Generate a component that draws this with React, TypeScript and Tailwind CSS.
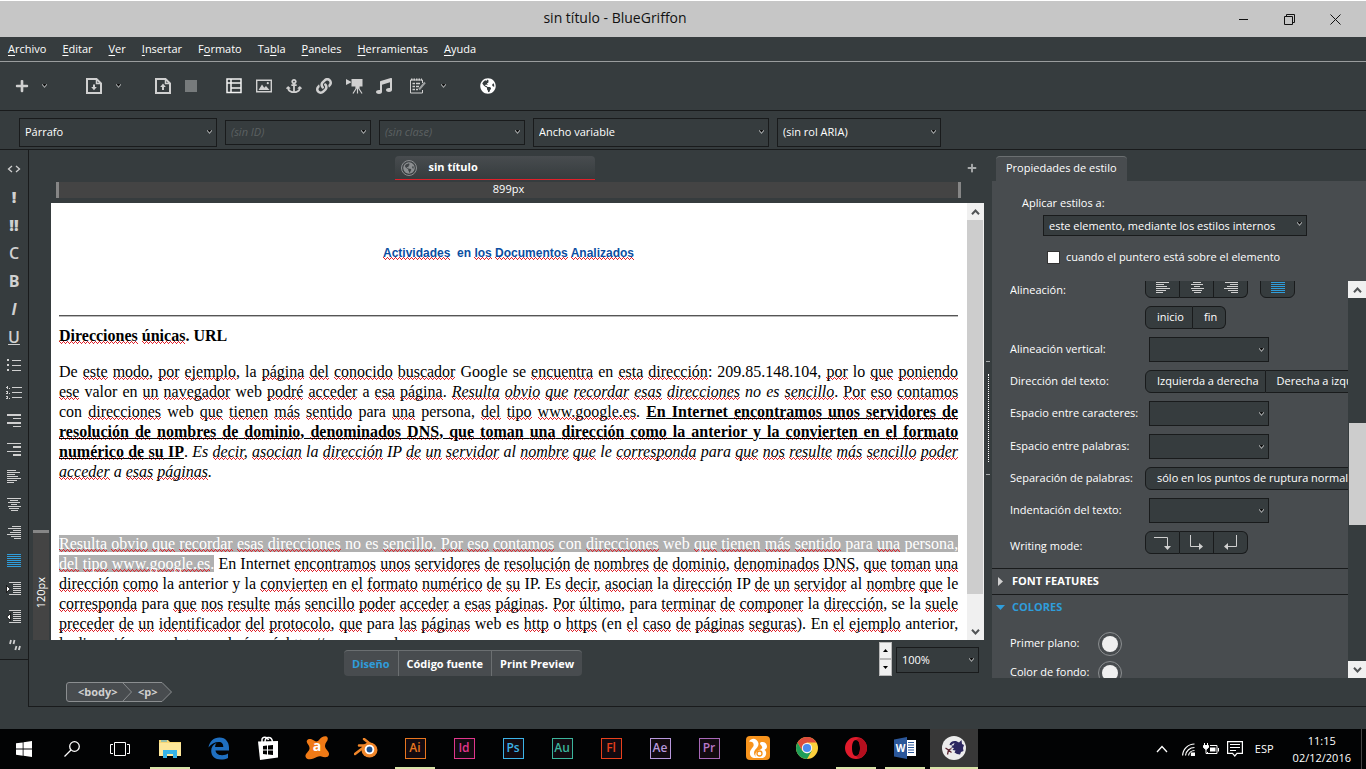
import type { ReactNode } from 'react';
import { FaAnchor, FaGlobeAmericas, FaLink, FaMusic, FaPlus } from 'react-icons/fa';

const MENUS = [
  ['', 'A', 'rchivo'],
  ['', 'E', 'ditar'],
  ['', 'V', 'er'],
  ['', 'I', 'nsertar'],
  ['F', 'o', 'rmato'],
  ['Ta', 'b', 'la'],
  ['', 'P', 'aneles'],
  ['', 'H', 'erramientas'],
  ['', 'A', 'yuda'],
];

// words the (English) spell checker accepts; everything else gets a squiggle
const KNOWN_WORDS = new Set(
  'De la Google se en lo valor web a no es con para persona anterior y al le IP Es En Internet o URL as'.split(' '),
);

function Proof({ children }: { children: string }) {
  const parts = children.split(/([\p{L}]+(?:\.[\p{L}]+)*)/u);
  return (
    <>
      {parts.map((part, i) =>
        i % 2 === 1 && !KNOWN_WORDS.has(part) ? (
          <span
            key={i}
            className="bg-[linear-gradient(90deg,#e0202a_1px,transparent_1px),linear-gradient(90deg,#e0202a_1px,transparent_1px),linear-gradient(90deg,#e0202a_1px,transparent_1px)] bg-[length:4px_1px,2px_1px,4px_1px] bg-[position:0_calc(100%-2px),1px_calc(100%-1px),2px_100%] bg-repeat-x"
          >
            {part}
          </span>
        ) : (
          part
        ),
      )}
    </>
  );
}

function Caret({ className = '' }: { className?: string }) {
  return (
    <svg viewBox="0 0 5 4" className={`h-1 w-[5px] ${className}`} aria-hidden>
      <path d="M0 0h5v1L2.500 4 0 1z" fill="#a9acad" />
      <path d="M.5 0h4L2.500 2.500z" fill="#0c0c0c" />
    </svg>
  );
}

interface DropDownProps {
  label: string;
  value?: string;
  className: string;
  muted?: boolean;
}

function DropDown({ label, value = '', className, muted }: DropDownProps) {
  return (
    <div className={`relative ${className}`}>
      <select
        aria-label={label}
        className={`h-full w-full appearance-none border border-[#191b1c] bg-[#363c3e] pl-[5px] pr-4 pt-px outline-none ${muted ? 'italic text-[#5c6162]' : 'text-white'}`}
      >
        <option>{value}</option>
      </select>
      <Caret className="pointer-events-none absolute right-[5px] top-1/2 -mt-0.5" />
    </div>
  );
}

function Lines({ rows, className = 'text-[#d0d0d0]' }: { rows: number[][]; className?: string }) {
  return (
    <svg viewBox="0 0 16 14" className={`h-3.5 w-4 ${className}`} fill="currentColor" shapeRendering="crispEdges" aria-hidden>
      {rows.map(([x, y, w, h = 1], i) => (
        <rect key={i} x={x} y={y} width={w} height={h} />
      ))}
    </svg>
  );
}

const LEFT = [[1, 0, 9], [1, 2, 13], [1, 4, 8], [1, 6, 11], [1, 8, 14], [1, 10, 10], [1, 12, 7]];
const CENTER = [[1, 0, 14], [4, 2, 8], [2, 4, 12], [5, 6, 6], [2, 8, 13], [3, 10, 10], [5, 12, 7]];
const RIGHT = [[6, 0, 9], [2, 2, 13], [7, 4, 8], [4, 6, 11], [1, 8, 14], [5, 10, 10], [8, 12, 7]];
const FULL = [[1, 0, 14], [1, 2, 14], [1, 4, 14], [1, 6, 14], [1, 8, 14], [1, 10, 14], [1, 12, 14]];
const TEXT = [[3, 0, 12], [7, 2, 8], [7, 4, 8], [7, 6, 8], [7, 8, 8], [7, 10, 8], [3, 12, 12]];

function Indent({ flip }: { flip?: boolean }) {
  return (
    <span className="relative">
      <Lines rows={TEXT} />
      <svg viewBox="0 0 5 8" className="absolute left-0 top-[3px] h-2 w-[5px]" aria-hidden>
        <path d={flip ? 'M4.500.5v7L.8 4z' : 'M.5.5v7L4.200 4z'} fill="#fff" stroke="#000" strokeWidth=".8" />
      </svg>
    </span>
  );
}

const SIDE_TOOLS: [string, ReactNode][] = [
  [
    'Etiqueta',
    <svg viewBox="0 0 14 8" className="h-2 w-3.5" fill="none" stroke="#d0d0d0" strokeWidth="1.300" aria-hidden>
      <path d="M5 1 1.500 4 5 7M9 1l3.500 3L9 7" />
    </svg>,
  ],
  ['Énfasis', <span className="text-base font-extrabold">!</span>],
  ['Énfasis fuerte', <span className="text-base font-extrabold">!!</span>],
  ['Código', <span className="text-base font-semibold">C</span>],
  ['Negrita', <span className="text-base font-bold">B</span>],
  ['Cursiva', <span className="text-base font-bold italic">I</span>],
  ['Subrayado', <span className="text-base font-semibold underline">U</span>],
  [
    'Lista',
    <Lines rows={[[1, 1, 2, 2], [6, 2, 9], [1, 6, 2, 2], [6, 7, 9], [1, 11, 2, 2], [6, 12, 9]]} />,
  ],
  [
    'Lista numerada',
    <Lines
      rows={[[1, 0, 1, 3], [0, 1, 1], [3, 2, 1], [6, 1, 10], [0, 5, 2], [1, 6, 1], [0, 7, 2], [3, 7, 1], [6, 6, 10], [0, 10, 2], [1, 11, 1], [0, 12, 2], [3, 12, 1], [6, 11, 10]]}
    />,
  ],
  ['Término', <Lines rows={[[1, 0, 14, 2], [7, 4, 8], [1, 8, 14, 2], [7, 12, 8]]} />],
  ['Definición', <Lines rows={[[1, 1, 14], [7, 4, 8, 2], [1, 9, 14], [7, 12, 8, 2]]} />],
  ['Izquierda', <Lines rows={LEFT} />],
  ['Centro', <Lines rows={CENTER} />],
  ['Derecha', <Lines rows={RIGHT} />],
  ['Justificar', <Lines rows={FULL} className="text-[#2f9ddb]" />],
  ['Aumentar sangría', <Indent />],
  ['Reducir sangría', <Indent flip />],
  [
    'Cita',
    <svg viewBox="0 0 14 14" className="size-3.5" fill="none" stroke="#d0d0d0" strokeWidth="1.800" aria-hidden>
      <path d="M4 2 3 6M7.500 2l-1 4M9.500 8l-1.200 4M13 8l-1.200 4" />
    </svg>,
  ],
];

function ToolButton({ label, className, children }: { label: string; className: string; children: ReactNode }) {
  return (
    <button type="button" aria-label={label} className={`flex h-6 shrink-0 items-center justify-center text-[#d0d0d0] ${className}`}>
      {children}
    </button>
  );
}

function PageIcon({ up }: { up?: boolean }) {
  return (
    <svg viewBox="0 0 16 16" className="size-4" fill="none" stroke="#d0d0d0" strokeWidth="2" aria-hidden>
      <path d="M1 1h9.500L15 5.500V15H1z" />
      <path d="M10.500 1v4.500H15" strokeWidth="1.500" />
      <path d={up ? 'M8 12V8' : 'M8 6.500v3'} />
      <path d={up ? 'M5.200 9 8 5.500 10.800 9z' : 'M5.200 9 8 12.200 10.800 9z'} fill="#d0d0d0" stroke="none" />
    </svg>
  );
}

function Toolbar() {
  return (
    <div className="flex h-[49px] items-center border-b border-[#191b1c] pl-2.5">
      <ToolButton label="Nuevo" className="w-6"><FaPlus className="size-3.5" /></ToolButton>
      <ToolButton label="Opciones de nuevo" className="w-5"><Caret /></ToolButton>
      <ToolButton label="Abrir" className="ml-7 w-6"><PageIcon /></ToolButton>
      <ToolButton label="Opciones de abrir" className="w-6"><Caret /></ToolButton>
      <ToolButton label="Guardar" className="ml-5 w-[26px]"><PageIcon up /></ToolButton>
      <ToolButton label="Detener" className="w-[30px]"><span className="size-3 bg-[#777b7c]" /></ToolButton>
      <div className="ml-[13px] flex">
        <ToolButton label="Tabla" className="w-[30px]">
          <svg viewBox="0 0 16 16" className="size-4" fill="none" stroke="#f2f2f2" strokeWidth="1.500" aria-hidden>
            <path d="M1 1h14v13.500H1zM1 5h14M5 1v13.500M5 10h10" />
          </svg>
        </ToolButton>
        <ToolButton label="Imagen" className="w-[30px]">
          <svg viewBox="0 0 16 14" className="h-3.5 w-4" aria-hidden>
            <path d="M.7 1.200h14.600v11.600H.7z" fill="none" stroke="#d0d0d0" strokeWidth="1.400" />
            <path d="M2.500 11 6 5.500l2.200 3.200 1.800-1.700L13.500 11z" fill="#d0d0d0" />
            <circle cx="11.800" cy="4.200" r="1.100" fill="#d0d0d0" />
          </svg>
        </ToolButton>
        <ToolButton label="Ancla" className="w-[30px]"><FaAnchor className="size-4" /></ToolButton>
        <ToolButton label="Enlace" className="w-[30px]"><FaLink className="size-4" /></ToolButton>
        <ToolButton label="Vídeo" className="w-[30px]">
          <svg viewBox="0 0 17 16" className="h-4 w-[17px]" fill="#d0d0d0" aria-hidden>
            <path d="M5.500 1h11v7.500h-11zM0 1l5 2.700v.8L0 7z" />
            <path d="M10 8h3v2h-3zM10.500 10l-3.500 5.500M12.500 10l3.500 5.500M11.500 10v5.500" stroke="#d0d0d0" strokeWidth="1.200" />
          </svg>
        </ToolButton>
        <ToolButton label="Audio" className="w-[30px]"><FaMusic className="size-4" /></ToolButton>
      </div>
      <ToolButton label="Formulario" className="ml-1 w-[30px]">
        <svg viewBox="0 0 16 16" className="size-4" fill="none" stroke="#d0d0d0" aria-hidden>
          <path d="M12.500 5V2h-12v13h12v-3" />
          <path d="M1 1.500h11" strokeWidth="2" strokeDasharray="1.500 1" />
          <path d="M2.500 5.500H5M6 5.500h4M2.500 8.500H5M6 8.500h3M2.500 11.500H5M6 11.500h2" strokeWidth="1.500" />
          <path d="m9 11.500 6-7" strokeWidth="2" stroke="#9ea1a2" />
        </svg>
      </ToolButton>
      <ToolButton label="Opciones de formulario" className="w-5"><Caret /></ToolButton>
      <ToolButton label="Navegador" className="ml-[23px] w-6"><FaGlobeAmericas className="size-4 text-white" /></ToolButton>
    </div>
  );
}

function ScrollArrow({ label, down }: { label: string; down?: boolean }) {
  return (
    <button type="button" aria-label={label} className="flex h-[17px] shrink-0 items-center justify-center bg-[#f0f0f0]">
      <svg viewBox="0 0 9 6" className="h-1.5 w-[9px]" fill="none" stroke="#505355" strokeWidth="2" aria-hidden>
        <path d={down ? 'M1 .8 4.500 4.500 8 .8' : 'M1 5.200 4.500 1.500 8 5.200'} />
      </svg>
    </button>
  );
}

function Editor() {
  return (
    <div className="flex min-h-0 flex-1 pl-1">
      <div className="mr-0.5 flex w-4 flex-col justify-end">
        <div className="flex h-[110px] items-center justify-center border-t-[3px] border-[#868686] bg-[#444] pt-3 text-[11px] text-white">
          <span className="rotate-180 [writing-mode:vertical-rl]">120px</span>
        </div>
      </div>
      <article className="min-w-0 flex-1 overflow-hidden bg-white pl-2 pr-[9px] pt-10 font-['Liberation_Serif',serif] text-base leading-5 text-black">
        <h1 className="whitespace-pre text-center font-['Liberation_Sans_Narrow','Liberation_Sans',sans-serif] text-xs leading-5 font-bold text-[#0b4ea2]">
          <Proof>{'Actividades  en los Documentos Analizados'}</Proof>
        </h1>
        <hr className="mt-[52px] h-0.5 border-t border-b border-t-[#555] border-b-[#bbb]" />
        <h2 className="mt-[9px] font-bold"><Proof>Direcciones únicas. URL</Proof></h2>
        <p className="mt-4 text-justify">
          <Proof>De este modo, por ejemplo, la página del conocido buscador Google se encuentra en esta dirección: 209.85.148.104, por lo que poniendo ese valor en un navegador web podré acceder a esa página. </Proof>
          <i><Proof>Resulta obvio que recordar esas direcciones no es sencillo</Proof></i>
          <Proof>. Por eso contamos con direcciones web que tienen más sentido para una persona, del tipo www.google.es. </Proof>
          <b className="underline">
            <Proof>En Internet encontramos unos servidores de resolución de nombres de dominio, denominados DNS, que toman una dirección como la anterior y la convierten en el formato numérico de su IP</Proof>
          </b>
          .{' '}
          <i><Proof>Es decir, asocian la dirección IP de un servidor al nombre que le corresponda para que nos resulte más sencillo poder acceder a esas páginas.</Proof></i>
        </p>
        <p className="mt-[52px] text-justify">
          <span className="bg-[#b0b0b0] text-white">
            <Proof>Resulta obvio que recordar esas direcciones no es sencillo. Por eso contamos con direcciones web que tienen más sentido para una persona, del tipo www.google.es.</Proof>
          </span>{' '}
          <Proof>En Internet encontramos unos servidores de resolución de nombres de dominio, denominados DNS, que toman una dirección como la anterior y la convierten en el formato numérico de su IP. Es decir, asocian la dirección IP de un servidor al nombre que le corresponda para que nos resulte más sencillo poder acceder a esas páginas. Por último, para terminar de componer la dirección, se la suele preceder de un identificador del protocolo, que para las páginas web es http o https (en el caso de páginas seguras). En el ejemplo anterior, la dirección completa quedaría así: http://www.google.es</Proof>
        </p>
      </article>
      <div className="flex w-[17px] flex-col bg-[#f0f0f0]">
        <ScrollArrow label="Subir" />
        <div className="mr-px flex-[374] bg-[#cdcdcd]" />
        <div className="flex-[29]" />
        <ScrollArrow label="Bajar" down />
      </div>
    </div>
  );
}

function ViewBar() {
  const tab = 'border-t border-[#6b6f71] bg-[#484c4f] px-2 py-1 font-bold';
  return (
    <div className="flex h-[39px] shrink-0 items-start">
      <div className="ml-[315px] mt-2.5 flex text-[11px] leading-[17px] text-white">
        <button type="button" className={`${tab} rounded-l text-[#2f9ddb]`}>Diseño</button>
        <button type="button" className={`${tab} border-l`}>Código fuente</button>
        <button type="button" className={`${tab} rounded-r border-l`}>Print Preview</button>
      </div>
      <div className="ml-auto mr-1 mt-0.5 flex h-[34px] w-[13px] flex-col gap-0.5 bg-[#b8b8b8] p-px">
        {['M0 3h5L2.500 0z', 'M0 0h5L2.500 3z'].map((d, i) => (
          <button key={d} type="button" aria-label={i ? 'Reducir zoom' : 'Aumentar zoom'} className="flex flex-1 items-center justify-center bg-[#f0f0f0]">
            <svg viewBox="0 0 5 3" className="h-[3px] w-[5px]" aria-hidden><path d={d} /></svg>
          </button>
        ))}
      </div>
      <DropDown label="Zoom" value="100%" className="mr-[5px] mt-[7px] h-[26px] w-[83px]" />
    </div>
  );
}

function Breadcrumb() {
  return (
    <nav className="flex h-[27px] shrink-0 pl-[37px] pt-[3px]">
      <div className="relative flex h-5 w-[106px] items-center text-[11px] font-bold text-[#d0d0d0]">
        <svg viewBox="0 0 106 20" className="absolute inset-0" fill="#484c4f" stroke="#8b8e90" aria-hidden>
          <path d="M3 .5h93l9.500 9.500-9.500 9.500H3A2.500 2.500 0 0 1 .5 17V3A2.500 2.500 0 0 1 3 .5z" />
          <path d="m56.500.5 9 9.500-9 9.500" fill="none" />
        </svg>
        <button type="button" className="relative w-[60px] pl-3 text-left">&lt;body&gt;</button>
        <button type="button" className="relative w-10 pl-3 text-left">&lt;p&gt;</button>
      </div>
    </nav>
  );
}

const segment = 'flex h-[23px] shrink-0 items-center justify-center border border-[#191b1c] bg-[#363c3e]';

function WritingArrow({ d, head }: { d: string; head: string }) {
  return (
    <svg viewBox="0 0 18 16" className="h-4 w-[18px]" aria-hidden>
      <path d={d} fill="none" stroke="#d0d0d0" />
      <path d={head} fill="#d0d0d0" />
    </svg>
  );
}

function PropertyRow({ label, align = 'items-center', children }: { label: string; align?: string; children: ReactNode }) {
  return (
    <div className={`flex ${align}`}>
      <span className="w-[135px] shrink-0">{label}</span>
      {children}
    </div>
  );
}

function StylePanel() {
  const field = 'ml-1 h-[25px] w-[120px]';
  return (
    <aside className="flex w-[374px] shrink-0 flex-col pb-7 text-white">
      <div className="flex h-[31px] items-end pl-1">
        <button type="button" className="h-[25px] rounded-t border-t border-[#6b6f71] bg-[#484c4f] px-2.5 pb-0.5">Propiedades de estilo</button>
      </div>
      <div className="flex min-h-0 flex-1 flex-col bg-[#484c4f]">
        <div className="h-[100px] shrink-0 pl-[30px] pt-3.5">
          <label htmlFor="apply-to" className="block leading-4">Aplicar estilos a:</label>
          <div className="relative ml-[21px] mt-1 h-[21px] w-[264px]">
            <select id="apply-to" className="h-full w-full appearance-none border border-[#191b1c] bg-[#363c3e] pl-[5px] pt-px">
              <option>este elemento, mediante los estilos internos</option>
            </select>
            <Caret className="pointer-events-none absolute right-[5px] top-[7px]" />
          </div>
          <label className="ml-[25px] mt-3 flex items-center leading-[18px]">
            <input type="checkbox" className="mr-1.5 size-[13px] appearance-none border border-[#333] bg-white" />
            cuando el puntero está sobre el elemento
          </label>
        </div>
        <div className="flex min-h-0 flex-1">
          <div className="min-w-0 flex-1 overflow-hidden">
            <div className="flex flex-col gap-2 whitespace-nowrap pb-3.5 pl-[18px]">
              <div className="flex h-[17px] items-end overflow-hidden">
                <span className="w-[135px] leading-4">Alineación:</span>
                <button type="button" aria-label="Alinear a la izquierda" className={`${segment} w-[35px] rounded-l-md`}><Lines rows={LEFT} /></button>
                <button type="button" aria-label="Centrar" className={`${segment} w-[34px] border-l-0`}><Lines rows={CENTER} /></button>
                <button type="button" aria-label="Alinear a la derecha" className={`${segment} w-[34px] rounded-r-md border-l-0`}><Lines rows={RIGHT} /></button>
                <button type="button" aria-label="Justificar texto" className={`${segment} ml-3 w-[35px] rounded-md`}><Lines rows={FULL} className="text-[#2f9ddb]" /></button>
              </div>
              <PropertyRow label="">
                <button type="button" className={`${segment} rounded-l-md pl-[11px] pr-2`}>inicio</button>
                <button type="button" className={`${segment} rounded-r-md border-l-0 pl-[11px] pr-2`}>fin</button>
              </PropertyRow>
              <PropertyRow label="Alineación vertical:"><DropDown label="Alineación vertical" className={field} /></PropertyRow>
              <PropertyRow label="Dirección del texto:">
                <button type="button" className={`${segment} rounded-l-md pl-[11px] pr-1.5`}>Izquierda a derecha</button>
                <button type="button" className={`${segment} rounded-r-md border-l-0 pl-[11px] pr-1.5`}>Derecha a izquierda</button>
              </PropertyRow>
              <PropertyRow label="Espacio entre caracteres:"><DropDown label="Espacio entre caracteres" className={field} /></PropertyRow>
              <PropertyRow label="Espacio entre palabras:"><DropDown label="Espacio entre palabras" className={field} /></PropertyRow>
              <PropertyRow label="Separación de palabras:">
                <button type="button" className={`${segment} rounded-md pl-[11px] pr-1.5`}>sólo en los puntos de ruptura normales</button>
              </PropertyRow>
              <PropertyRow label="Indentación del texto:"><DropDown label="Indentación del texto" className={field} /></PropertyRow>
              <PropertyRow label="Writing mode:" align="items-end">
                <button type="button" aria-label="Horizontal" className={`${segment} w-[35px] rounded-l-md`}>
                  <WritingArrow d="M0 2.500h13.500V12" head="M10 11h7l-3.500 4z" />
                </button>
                <button type="button" aria-label="Vertical hacia la derecha" className={`${segment} w-[34px] border-l-0`}>
                  <WritingArrow d="M2.500 0v11.500H12" head="M11 8v7l4-3.500z" />
                </button>
                <button type="button" aria-label="Vertical hacia la izquierda" className={`${segment} w-[34px] rounded-r-md border-l-0`}>
                  <WritingArrow d="M14.500 0v11.500H5" head="M6 8v7l-4-3.500z" />
                </button>
              </PropertyRow>
            </div>
            <button type="button" className="flex h-[26px] w-full items-center border-t border-[#191b1c] pl-1.5 text-[11px] font-bold">
              <svg viewBox="0 0 5 9" className="mr-[9px] h-[9px] w-[5px]" aria-hidden><path d="M0 0v9l5-4.500z" fill="#d0d0d0" /></svg>
              FONT FEATURES
            </button>
            <button type="button" className="flex h-[26px] w-full items-center border-t border-[#191b1c] pl-1 text-[11px] font-bold text-[#2f9ddb]">
              <svg viewBox="0 0 9 5" className="mr-[7px] h-[5px] w-[9px]" aria-hidden><path d="M0 0h9L4.500 5z" fill="currentColor" /></svg>
              COLORES
            </button>
            <div className="pl-[18px] pt-[9px]">
              {['Primer plano:', 'Color de fondo:'].map((label) => (
                <div key={label} className="flex h-[29px] items-center">
                  <span className="w-[88px]">{label}</span>
                  <button type="button" aria-label={label} className="flex size-6 items-center justify-center rounded-full border border-[#8b8e90]">
                    <span className="size-4 rounded-full bg-[#f0f0f0]" />
                  </button>
                </div>
              ))}
            </div>
          </div>
          <div className="flex w-[18px] flex-col bg-[#363c3e]">
            <ScrollArrow label="Subir panel" />
            <div className="flex-[125]" />
            <div className="ml-px flex-[102] bg-[#cdcdcd]" />
            <div className="flex-[136]" />
            <ScrollArrow label="Bajar panel" down />
          </div>
        </div>
      </div>
    </aside>
  );
}

function Adobe({ text, className }: { text: string; className: string }) {
  return (
    <span className={`flex size-[21px] items-center justify-center border bg-[#120a10] text-xs font-semibold ${className}`}>
      {text}
    </span>
  );
}

const APPS: { name: string; icon: ReactNode; open?: boolean; active?: boolean }[] = [
  {
    name: 'Explorador de archivos',
    open: true,
    icon: (
      <svg viewBox="0 0 22 19" className="h-[19px] w-[22px]" aria-hidden>
        <path d="M0 1h9l2 2h11v14H0z" fill="#f8d775" />
        <path d="M0 4h22v13H0z" fill="#fde79a" />
        <path d="M2 1.500h6v1H2z" fill="#3cabdf" />
        <path d="M4 19v-8h14v8h-4v-4H8v4z" fill="#35b3e6" />
      </svg>
    ),
  },
  {
    name: 'Edge',
    icon: (
      <svg viewBox="0 0 22 23" className="h-[23px] w-[22px]" aria-hidden>
        <path
          d="M.5 10.500C1.500 4.500 5.500.5 11.500.5c6.500 0 9.500 5 9.500 10v3H7.500c.3 3 3 4.700 6.500 4.700 2.500 0 4.500-.7 6-1.600V21c-2 1-4.500 1.500-7 1.500-6 0-9.800-3.500-9.800-8.500 0-4 2-6.500 5.300-8-1 1.200-1.300 2.500-1.400 4h8.200c0-3-1.300-5-4.500-5-4 0-8 2-10.300 5.500z"
          fill="#1f6fc0"
        />
      </svg>
    ),
  },
  {
    name: 'Tienda',
    icon: (
      <svg viewBox="0 0 22 24" className="h-6 w-[22px]" aria-hidden>
        <path d="M5 6V3.500C5 .5 10 .5 11.500 4M8 6c0-6 7-6 7.500 0" fill="none" stroke="#fff" strokeWidth="1.500" />
        <path d="m1 5.500 20-.5v16.500L3 24z" fill="#fff" />
        <path d="m6 10 4-.4v3.900H6zM11 9.500l5-.5v4.500h-5zM6 14.500h4v4l-4-.4zM11 14.500h5V19l-5-.5z" fill="#000" />
      </svg>
    ),
  },
  {
    name: 'Avast',
    icon: (
      <span className="relative flex">
        <svg viewBox="0 0 24 24" className="size-6" aria-hidden>
          <path d="M14 4c2-3 7-5 8.500-2.500C24 4.500 20 6.500 20 10s4.500 5 4 8.500-5 3-7.500 2-5 .5-8 2S1 23.500.5 20.500 4 16 4.500 12.500.5 7 2 4.500 7 3 9 4.500 13 5.500 14 4z" fill="#f07a16" />
        </svg>
        <span className="absolute inset-0 text-center text-sm leading-5 font-bold text-white">a</span>
      </span>
    ),
  },
  {
    name: 'Blender',
    icon: (
      <svg viewBox="0 0 24 20" className="h-5 w-6" aria-hidden>
        <path d="M1 16 12 7.500H5M10 1l10 8" fill="none" stroke="#f0862a" strokeWidth="2.500" strokeLinecap="round" />
        <ellipse cx="15.500" cy="12" rx="8" ry="7.500" fill="#f0862a" />
        <circle cx="15.500" cy="11.500" r="4.800" fill="#fff" />
        <circle cx="15.500" cy="11.500" r="2.900" fill="#1b4f8f" />
      </svg>
    ),
  },
  { name: 'Illustrator', open: true, icon: <Adobe text="Ai" className="border-[#e8761f] text-[#e8761f]" /> },
  { name: 'InDesign', icon: <Adobe text="Id" className="border-[#e0368c] text-[#e0368c]" /> },
  { name: 'Photoshop', icon: <Adobe text="Ps" className="border-[#3cb4e8] text-[#3cb4e8]" /> },
  { name: 'Audition', icon: <Adobe text="Au" className="border-[#3bb49c] text-[#3bb49c]" /> },
  { name: 'Flash', icon: <Adobe text="Fl" className="border-[#e8401c] text-[#e8401c]" /> },
  { name: 'After Effects', icon: <Adobe text="Ae" className="border-[#b898dc] text-[#b898dc]" /> },
  { name: 'Premiere', icon: <Adobe text="Pr" className="border-[#a868b8] text-[#b878c8]" /> },
  {
    name: 'UC Browser',
    icon: (
      <svg viewBox="0 0 24 24" className="size-6" aria-hidden>
        <rect width="24" height="24" rx="4" fill="#f8941d" />
        <path d="M3 5.500C5 2.500 8 2 10.500 4s2.500 5 1 7-3.500 3.500-3.500 6 2 4.500 4.500 5H8c-3-.5-4.500-3-4-6s3.500-4.500 3.700-7C7.800 6.500 6 5.500 3 5.500z" fill="#fff" />
        <path d="M16.500 6c2.500 0 4.500 2 4.500 4.500 0 2-1.500 2.500-2.500 3.500 1.500 1 2 2.500 1.500 4.500S18 22 16 22h-4c-2.500 0-3.500-3-2-5.500s5-2.500 6-4.500-2-3-2-4.500 1.200-1.500 2.500-1.500z" fill="#fff" />
        <circle cx="13.500" cy="17.500" r="2.500" fill="none" stroke="#f8941d" strokeWidth="1.300" />
      </svg>
    ),
  },
  {
    name: 'Chrome',
    icon: (
      <svg viewBox="0 0 22 22" className="size-[22px]" aria-hidden>
        <circle cx="11" cy="11" r="11" fill="#fcd03c" />
        <path d="M1.500 5.500A11 11 0 0 1 20.500 5.500H11L6.200 13.800z" fill="#dd4b3c" />
        <path d="M1.500 5.500A11 11 0 0 0 11 22l4.800-8.300L11 16.500 6.200 13.800z" fill="#1f9e58" />
        <circle cx="11" cy="11" r="5.200" fill="#f4f4f4" />
        <circle cx="11" cy="11" r="4.100" fill="#4a8af0" />
      </svg>
    ),
  },
  {
    name: 'Opera',
    open: true,
    icon: (
      <svg viewBox="0 0 22 22" className="size-[22px]" aria-hidden>
        <path d="M11 0a11 11 0 1 0 0 22 11 11 0 0 0 0-22zm0 3c2.600 0 4 3.500 4 8s-1.400 8-4 8-4-3.500-4-8 1.400-8 4-8z" fill="#e01b2c" fillRule="evenodd" />
        <path d="M17 1.800A11 11 0 0 1 17 20.200c-2 1-4.500 1-6-1.200 2.600 0 4-3.500 4-8s-1.400-8-4-8c1.500-2 4-2.200 6-1.200z" fill="#b40f1e" />
      </svg>
    ),
  },
  {
    name: 'Word',
    open: true,
    icon: (
      <span className="relative flex">
        <svg viewBox="0 0 22 22" className="size-[22px]" aria-hidden>
          <path d="M12 3h10v16H12z" fill="#fff" />
          <path d="M14 5.500h6M14 8h6M14 10.500h6M14 13h6M14 15.500h6" stroke="#2b579a" />
          <path d="m0 2.500 13-2.500v22L0 19.500z" fill="#2b579a" />
        </svg>
        <span className="absolute left-0 top-0 w-[13px] text-center text-[10px] leading-[22px] font-bold text-white">W</span>
      </span>
    ),
  },
  {
    name: 'BlueGriffon',
    open: true,
    active: true,
    icon: (
      <svg viewBox="0 0 24 24" className="size-6" aria-hidden>
        <circle cx="12" cy="12" r="12" fill="#ececec" />
        <path d="M7.500 9C8 5.500 11 4.500 14 5l3 1.500L19.500 4l.5 4 2 1-1 3 .5 3-2.500 1-1 2.500-3-.5-2.500-1.500 1-2-3-.5 1.500-2-3-.5 2-2z" fill="#2c2760" />
        <path d="m3.500 12 3 2 3-1.500M6.500 14l-1 4.500M6.500 14l3 2.500" fill="none" stroke="#5a2430" strokeWidth="1.300" />
        <path d="M9.500 8.500 12.500 7l-1 2.500z" fill="#ececec" />
      </svg>
    ),
  },
];

function Taskbar() {
  const system = 'flex w-12 items-center justify-center';
  return (
    <footer className="flex h-10 shrink-0 bg-[#020304] text-xs text-white">
      <button type="button" aria-label="Inicio" className={system}>
        <svg viewBox="0 0 16 16" className="size-4" fill="#fff" aria-hidden>
          <path d="m0 2.300 6.700-.9v6.200H0zM7.500 1.300 16 0v7.600H7.500zM0 8.400h6.700v6.300L0 13.800zM7.500 8.400H16V16l-8.500-1.200z" />
        </svg>
      </button>
      <button type="button" aria-label="Buscar" className={system}>
        <svg viewBox="0 0 16 16" className="size-4" fill="none" stroke="#fff" strokeWidth="1.300" aria-hidden>
          <circle cx="10.500" cy="5.500" r="4.800" />
          <path d="M7 9 .5 15.500" />
        </svg>
      </button>
      <button type="button" aria-label="Vista de tareas" className={system}>
        <svg viewBox="0 0 20 16" className="h-4 w-5" fill="none" stroke="#fff" aria-hidden>
          <path d="M4.500 1.500h11v13h-11zM3 3.500H.5v9H3M17 3.500h2.500v9H17" />
        </svg>
      </button>
      <div className="ml-0.5 flex gap-px">
        {APPS.map((app) => (
          <button
            key={app.name}
            type="button"
            aria-label={app.name}
            className={`relative flex w-12 items-center justify-center pb-0.5 ${app.active ? 'bg-[#383838]' : ''}`}
          >
            {app.icon}
            {app.open && <span className={`absolute bottom-0 h-0.5 bg-[#d8e4a8] ${app.active ? 'inset-x-0' : 'inset-x-1'}`} />}
          </button>
        ))}
      </div>
      <div className="ml-auto flex items-center">
        <svg viewBox="0 0 12 8" className="mr-3.5 h-2 w-3" fill="none" stroke="#fff" strokeWidth="1.300" aria-hidden>
          <path d="M1 7 6 1.500 11 7" />
        </svg>
        <svg viewBox="0 0 13 13" className="mr-2 size-[13px]" fill="none" stroke="#fff" strokeWidth="1.200" aria-hidden>
          <path d="M.6 12.500A12 12 0 0 1 12.500 1M3.500 12.500a9 9 0 0 1 9-8M6.500 12.500a6 6 0 0 1 6-5" />
          <path d="M9.500 10h3v2.500h-3z" fill="#fff" />
        </svg>
        <svg viewBox="0 0 16 12" className="mr-2 h-3 w-4" fill="none" stroke="#fff" aria-hidden>
          <path d="M7 2.500h7v8H4.500V9M15.500 5v3.500" />
          <path d="M7 4.500h5.500v4H7z" fill="#fff" stroke="none" />
          <path d="M1.500 0v2M4.500 0v2M3 6v4.500h2" />
          <path d="M.5 2.500h5v2L3 6.500l-2.500-2z" fill="#fff" />
        </svg>
        <svg viewBox="0 0 16 16" className="mr-3 size-4" fill="none" stroke="#fff" strokeWidth="1.200" aria-hidden>
          <path d="M.6.6h14.800v11.800H10L7.800 15l-2.300-2.600H.6zM3 3.500h10M3 6.500h10M3 9.500h6" />
        </svg>
        <span className="mr-[19px] text-[11px]">ESP</span>
        <time className="mr-2.5 text-center text-[11px] leading-[17px]">
          11:15
          <br />
          02/12/2016
        </time>
        <div className="mr-1 h-full w-px bg-[#444]" />
      </div>
    </footer>
  );
}

export default function App() {
  return (
    <div className="flex h-screen flex-col overflow-hidden bg-[#363c3e] font-['Open_Sans','Noto_Sans',sans-serif] text-[11px] text-white">
      <header className="relative flex h-[37px] shrink-0 items-center justify-center border-t border-white bg-[#c6c6c6] text-sm text-[#111]">
        <h1 className="pb-0.5 pr-[136px]">sin título - BlueGriffon</h1>
        <div className="absolute right-0 top-0 flex h-full">
          {[
            ['Minimizar', 'M1 5.500h9'],
            ['Restaurar', 'M.5 2.500h8v8h-8zM2.500 2.500v-2h8v8h-2'],
            ['Cerrar', 'm.5.5 10 10M10.500.5l-10 10'],
          ].map(([label, d]) => (
            <button key={label} type="button" aria-label={label} className="flex w-[46px] items-center justify-center last:mr-2">
              <svg viewBox="0 0 11 11" className="size-[11px]" fill="none" stroke="#111" aria-hidden>
                <path d={d} />
              </svg>
            </button>
          ))}
        </div>
      </header>

      <nav className="flex h-[25px] shrink-0 items-center gap-4 border-b border-[#9a9d9e] pl-2">
        {MENUS.map(([before, key, after]) => (
          <button key={before + key + after} type="button">
            {before}
            <u className="underline-offset-2">{key}</u>
            {after}
          </button>
        ))}
      </nav>

      <Toolbar />

      <div className="flex h-[39px] shrink-0 items-center border-b border-[#191b1c] pl-[19px] pt-1">
        <DropDown label="Formato" value="Párrafo" className="mr-2 h-[29px] w-[198px]" />
        <DropDown label="ID" value="(sin ID)" className="mr-2 h-[25px] w-[146px]" muted />
        <DropDown label="Clase" value="(sin clase)" className="mr-2 h-[25px] w-[146px]" muted />
        <DropDown label="Fuente" value="Ancho variable" className="mr-2 h-[29px] w-[236px]" />
        <DropDown label="Rol ARIA" value="(sin rol ARIA)" className="h-[29px] w-[164px]" />
      </div>

      <div className="flex min-h-0 flex-1">
        <div className="w-7 shrink-0">
          <div className="flex flex-col items-center border-b border-[#191b1c] pt-[5px]">
            {SIDE_TOOLS.map(([label, icon]) => (
              <ToolButton key={label} label={label} className="my-0.5 w-7">{icon}</ToolButton>
            ))}
          </div>
        </div>
        <main className="flex min-w-0 flex-1 border-b border-l border-[#191b1c]">
          <div className="flex min-w-0 flex-1 flex-col">
            <div className="flex h-8 shrink-0 items-center">
              <div className="flex h-full flex-1 justify-center pt-1.5">
                <button type="button" className="flex h-6 w-[200px] items-center rounded-t border-b border-[#e0202a] bg-linear-to-b from-[#484c4f] to-[#363c3e] pl-1.5 text-[11px] font-bold">
                  <FaGlobeAmericas className="mr-3 size-4 rounded-full border border-[#8b8e90] p-px text-[#8b8e90]" />
                  sin título
                </button>
              </div>
              <button type="button" aria-label="Nueva pestaña" className="flex w-6 justify-center pt-1">
                <FaPlus className="size-2.5 text-[#a9acad]" />
              </button>
            </div>
            <div className="mb-[5px] ml-[27px] mr-[23px] flex h-4 shrink-0 items-center justify-center border-x-[3px] border-[#868686] bg-[#444] pb-0.5">
              899px
            </div>
            <Editor />
            <ViewBar />
            <Breadcrumb />
          </div>
          <div className="flex w-2 items-center justify-center">
            <div className="mb-5 h-[114px] w-1 border-y border-[#a9acad] py-3">
              <div className="mx-auto h-full w-px border-l border-dotted border-white" />
            </div>
          </div>
          <StylePanel />
        </main>
      </div>
      <div className="h-[22px] shrink-0" />
      <Taskbar />
    </div>
  );
}
